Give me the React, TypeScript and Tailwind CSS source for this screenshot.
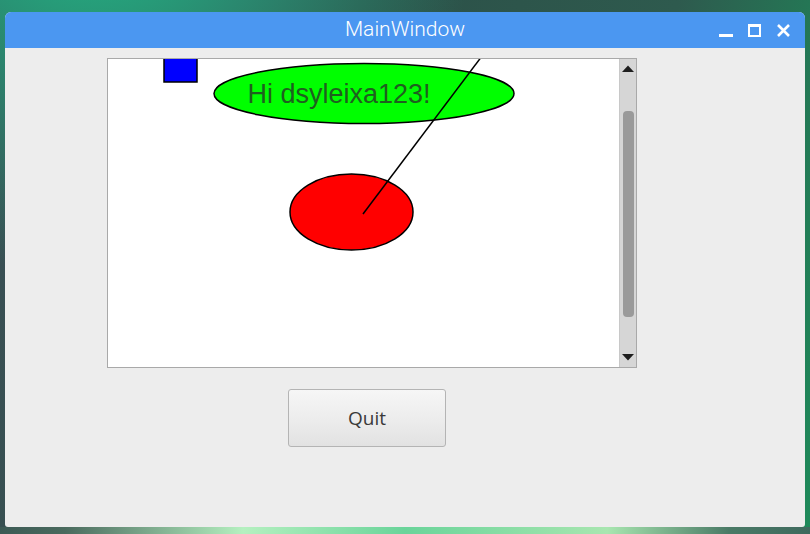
import React from 'react';

const Scrollbar = () => (
    <div className="flex w-[17px] flex-col items-center border-l border-[#c8c8c8] bg-[#d6d6d6]">
        <svg width="14" height="9" viewBox="0 0 14 9" className="mt-[5px]">
            <path d="M1 8 L7 1.5 L13 8 Z" fill="#1e1e1e" />
        </svg>
        <div className="mt-[38px] h-[206px] w-[11px] rounded-[4px] bg-[#9a9a9a]" />
        <div className="flex-1" />
        <svg width="14" height="9" viewBox="0 0 14 9" className="mb-[5px]">
            <path d="M1 1 L7 7.5 L13 1 Z" fill="#1e1e1e" />
        </svg>
    </div>
);

const Scene = () => (
    <svg width="512" height="308" viewBox="0 0 512 308" className="block">
        <rect x="56" y="-10" width="33" height="33" fill="#0000ff" stroke="#000" strokeWidth="1.5" />
        <ellipse cx="256" cy="34.5" rx="150" ry="30" fill="#00ff00" stroke="#000" strokeWidth="1.5" />
        <text
            x="231"
            y="44"
            textAnchor="middle"
            fontFamily="'Liberation Sans', Arial, sans-serif"
            fontSize="27"
            fill="#1f5f1f"
        >
            Hi dsyleixa123!
        </text>
        <ellipse cx="243.5" cy="153" rx="61.5" ry="38" fill="#ff0000" stroke="#000" strokeWidth="1.5" />
        <line x1="255" y1="155" x2="374" y2="-3" stroke="#000" strokeWidth="1.5" />
    </svg>
);

export default function App() {
    return (
        <div className="h-[534px] w-[810px] overflow-hidden bg-[radial-gradient(circle_at_12%_-20%,#20c08a_0%,#2a8a70_18%,transparent_40%),linear-gradient(100deg,#3b4f55_0%,#2c5048_40%,#2e5a4e_75%,#1e8a5a_100%)] px-[5px] pt-[12px] font-['Roboto',sans-serif]">
            <div className="flex h-[515px] w-[800px] flex-col overflow-hidden rounded-t-[6px] rounded-b-[3px] bg-[#ededed]">
                <div className="flex h-[36px] items-center bg-[#4b97f1] text-white">
                    <div className="w-[90px]" />
                    <div className="flex-1 text-center text-[21px] font-light">MainWindow</div>
                    <div className="flex w-[90px] items-center justify-end gap-[15px] pr-[14px]">
                        <div className="mt-[10px] h-[3px] w-[14px] bg-white" />
                        <div className="h-[13px] w-[13px] border-[2.5px] border-t-[3.5px] border-white" />
                        <svg width="15" height="15" viewBox="0 0 15 15">
                            <path d="M2 2 L13 13 M13 2 L2 13" stroke="#fff" strokeWidth="2.6" />
                        </svg>
                    </div>
                </div>
                <div className="flex flex-col">
                    <div className="ml-[102px] mt-[10px] flex h-[310px] w-[530px] border border-[#a9a9a9] bg-white">
                        <div className="flex-1 overflow-hidden">
                            <Scene />
                        </div>
                        <Scrollbar />
                    </div>
                    <button
                        type="button"
                        className="ml-[283px] mt-[21px] h-[58px] w-[158px] rounded-[3px] border border-[#b4b4b4] bg-[linear-gradient(180deg,#f6f6f6_0%,#ececec_55%,#e2e2e2_100%)] font-['Open_Sans',sans-serif] text-[19px] text-[#3a3a3a]"
                    >
                        Quit
                    </button>
                </div>
            </div>
            <div className="-mx-[5px] h-[7px] bg-[linear-gradient(90deg,#3c5a55_0%,#4a6a5e_8%,#b5f0c0_30%,#6ad49a_50%,#a8e6b0_75%,#4a7a66_90%,#3f6a5e_100%)]" />
        </div>
    );
}
